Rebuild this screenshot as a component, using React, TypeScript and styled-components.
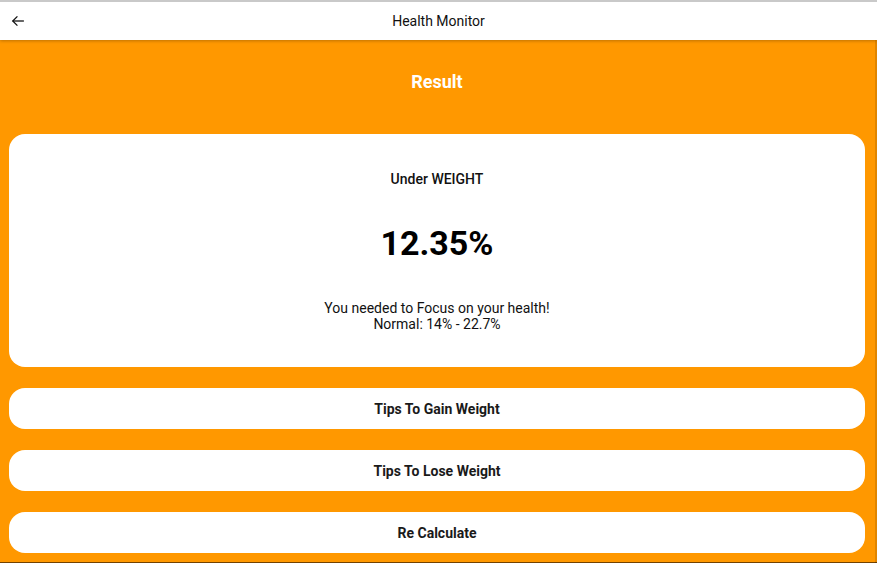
import React from "react";
import styled, { createGlobalStyle } from "styled-components";

const Global = createGlobalStyle`
  html, body { margin: 0; padding: 0; }
  body { font-family: Roboto, "Noto Sans", sans-serif; background: #FF9800; }
`;

const Page = styled.div`
  position: relative;
  width: 877px;
  height: 563px;
  background: #ff9800;
  display: flex;
  flex-direction: column;
  overflow: hidden;
  &::after {
    content: "";
    position: absolute;
    inset: 0;
    pointer-events: none;
    box-shadow: inset -2px 0 rgba(0, 0, 0, 0.12), inset 0 -1px rgba(90, 50, 0, 0.85);
  }
`;

const AppBar = styled.header`
  position: relative;
  z-index: 1;
  height: 38px;
  border-top: 2px solid #c9c9c9;
  background: #fff;
  display: flex;
  align-items: center;
  justify-content: center;
  box-shadow: 0 1px 3px rgba(0, 0, 0, 0.25);
  flex-shrink: 0;
`;

const BackButton = styled.button`
  position: absolute;
  left: 8px;
  top: 50%;
  transform: translateY(-50%);
  width: 20px;
  height: 20px;
  padding: 0;
  border: none;
  background: none;
  display: flex;
  align-items: center;
  justify-content: center;
`;

const AppTitle = styled.h1`
  margin: 0;
  font-size: 14px;
  font-weight: 400;
  color: #111;
`;

const Body = styled.main`
  flex: 1;
  display: flex;
  flex-direction: column;
  padding: 0 12px 0 9px;
`;

const Heading = styled.h2`
  margin: 0;
  box-sizing: border-box;
  height: 94px;
  padding-top: 30px;
  line-height: 24px;
  text-align: center;
  color: #fff;
  font-size: 18px;
  font-weight: 700;
`;

const Card = styled.section`
  background: #fff;
  border-radius: 16px;
  height: 233px;
  display: flex;
  flex-direction: column;
  align-items: center;
  color: #111;
`;

const Status = styled.div`
  margin-top: 36px;
  font-size: 14px;
  font-weight: 500;
  line-height: 18px;
`;

const Value = styled.div`
  margin-top: 35px;
  font-size: 34px;
  font-weight: 700;
  line-height: 40px;
  color: #000;
`;

const Advice = styled.div`
  margin-top: 37px;
  font-size: 14px;
  line-height: 16px;
  text-align: center;
`;

const Actions = styled.div`
  display: flex;
  flex-direction: column;
  gap: 21px;
  margin-top: 21px;
`;

const ActionButton = styled.button`
  height: 41px;
  border: none;
  border-radius: 16px;
  background: #fff;
  font-family: Roboto, "Noto Sans", sans-serif;
  font-size: 14px;
  font-weight: 700;
  color: #1a1a1a;
  cursor: pointer;
`;

export default function App() {
  return (
    <>
      <Global />
      <Page>
        <AppBar>
          <BackButton aria-label="Back">
            <svg width="14" height="14" viewBox="0 0 24 24" fill="none" stroke="#111" strokeWidth="2.2" strokeLinecap="square">
              <path d="M21 12H4" />
              <path d="M11 4l-8 8 8 8" strokeLinecap="butt" />
            </svg>
          </BackButton>
          <AppTitle>Health Monitor</AppTitle>
        </AppBar>
        <Body>
          <Heading>Result</Heading>
          <Card>
            <Status>Under WEIGHT</Status>
            <Value>12.35%</Value>
            <Advice>
              You needed to Focus on your health!
              <br />
              Normal: 14% - 22.7%
            </Advice>
          </Card>
          <Actions>
            <ActionButton>Tips To Gain Weight</ActionButton>
            <ActionButton>Tips To Lose Weight</ActionButton>
            <ActionButton>Re Calculate</ActionButton>
          </Actions>
        </Body>
      </Page>
    </>
  );
}
